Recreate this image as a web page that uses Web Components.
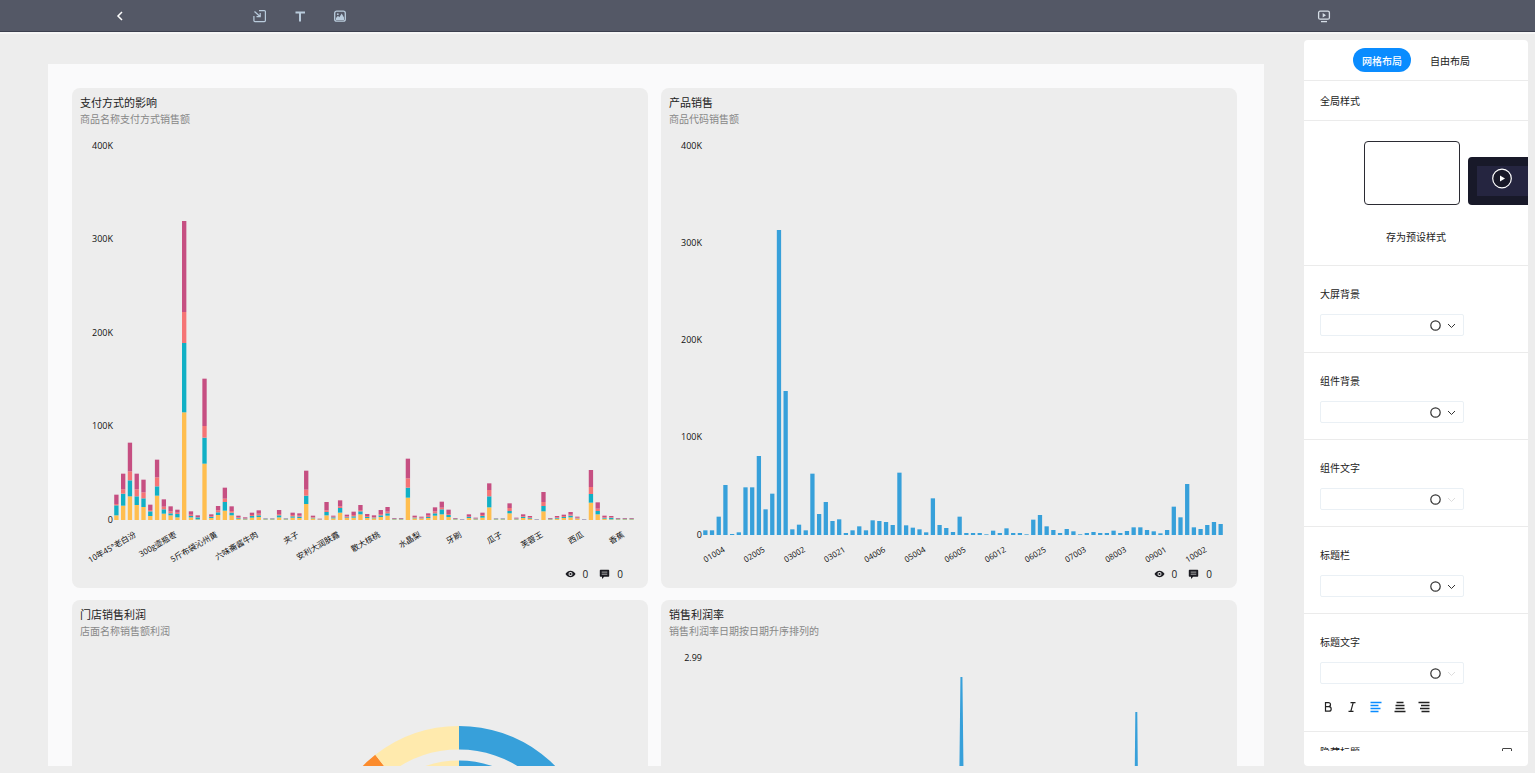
<!DOCTYPE html>
<html lang="zh-CN">
<head>
<meta charset="utf-8">
<title>大屏编辑</title>
<style>
  html, body { height: 100%; margin: 0; }
  body { background: #ededed; color: #222; font: 10px/16px "Open Sans", "Noto Sans CJK SC", sans-serif; overflow: hidden; }
</style>
</head>
<body>
<screen-editor>
  <editor-toolbar slot="toolbar"></editor-toolbar>

  <chart-card>
    <span slot="title">支付方式的影响</span>
    <span slot="subtitle">商品名称支付方式销售额</span>
    <bar-chart source="payment"></bar-chart>
  </chart-card>
  <chart-card>
    <span slot="title">产品销售</span>
    <span slot="subtitle">商品代码销售额</span>
    <bar-chart source="product"></bar-chart>
  </chart-card>
  <chart-card>
    <span slot="title">门店销售利润</span>
    <span slot="subtitle">店面名称销售额利润</span>
    <ring-chart></ring-chart>
  </chart-card>
  <chart-card>
    <span slot="title">销售利润率</span>
    <span slot="subtitle">销售利润率日期按日期升序排列的</span>
    <spike-chart></spike-chart>
  </chart-card>

  <style-panel slot="panel">
    <color-field>大屏背景</color-field>
    <color-field>组件背景</color-field>
    <color-field muted>组件文字</color-field>
    <color-field>标题栏</color-field>
    <color-field muted>标题文字<text-format slot="extra"></text-format></color-field>
  </style-panel>
</screen-editor>

<script>
const define = (name, html, setup) => {
  const template = document.createElement('template');
  template.innerHTML = html;
  customElements.define(name, class extends HTMLElement {
    constructor() {
      super();
      this.attachShadow({ mode: 'open' }).append(template.content.cloneNode(true));
      if (setup) setup(this);
    }
  });
};

define('screen-editor', `
  <style>
    :host { display: flex; flex-direction: column; height: 100vh; }
    .work { flex: 1; min-height: 0; display: flex; gap: 40px; padding: 8px 7px 7px 48px; }
    main { flex: 1; min-width: 0; margin-top: 24px; background: #fafafb; overflow: auto; scrollbar-width: none; }
    .grid { display: grid; grid-template-columns: 1fr 1fr; gap: 12px 13px; padding: 24px 27px 24px 24px; }
  </style>
  <slot name="toolbar"></slot>
  <div class="work">
    <main><div class="grid"><slot></slot></div></main>
    <slot name="panel"></slot>
  </div>`);

define('editor-toolbar', `
  <style>
    :host { display: block; position: relative; background: #545866; border-bottom: 1px solid #3c3f4e; box-shadow: 0 2px 0 #f6f6f6; }
    header { display: flex; align-items: center; height: 31px; padding: 0 199px 0 108px; }
    nav { display: flex; gap: 16px; margin-left: 116px; }
    button { display: grid; place-items: center; width: 24px; height: 24px; padding: 0; border: 0; background: none; color: #b9cbdc; }
    .back { color: #fff; }
    .play { margin-left: auto; color: #d5dde6; }
    svg { display: block; fill: none; stroke: currentColor; }
  </style>
  <header>
    <button class="back" aria-label="返回"><svg width="14" height="14" stroke-width="1.5"><path d="M9 3 5 7l4 4"/></svg></button>
    <nav>
      <button aria-label="导入"><svg width="14" height="14" stroke-width="1.2"><path d="M6 1.6h5.4a1 1 0 0 1 1 1v9a1 1 0 0 1-1 1h-9.500a1 1 0 0 1-1-1V7M1.500 2.500l5.500 5M7.200 4v3.700H3.500"/></svg></button>
      <button aria-label="文本"><svg width="14" height="14" stroke-width="2"><path d="M2.500 3.500h9.500M7 3.500v9"/></svg></button>
      <button aria-label="图片"><svg width="14" height="14" stroke-width="1.300"><rect x="1.700" y="2.200" width="10.600" height="10" rx="2"/><circle cx="4.800" cy="5.200" r=".9" fill="currentColor" stroke="none"/><path d="M3 11V9l2-2.200 1.300 1.400L8.700 4.500 11 8.500V11z" fill="currentColor" stroke="none"/></svg></button>
    </nav>
    <button class="play" aria-label="预览"><svg width="14" height="14" stroke-width="1.300"><rect x="1.600" y="2.200" width="10.800" height="8" rx="1.500"/><path d="M4 12.600h6"/><path d="M5.700 4v4.400L9 6.200z" fill="currentColor" stroke="none"/></svg></button>
  </header>`);

define('chart-card', `
  <style>
    :host { display: flex; flex-direction: column; height: 500px; box-sizing: border-box; padding: 6px 0 4px; border-radius: 8px; background: #ededed; overflow: hidden; }
    h2, p { margin: 0; padding: 0 8px; font-weight: 400; line-height: 17px; }
    h2 { font-size: 11px; color: #222; }
    p { font-size: 10px; color: #888; }
    .body { flex: 1; min-height: 0; }
    footer { display: flex; justify-content: flex-end; align-items: center; height: 20px; padding-right: 25px; gap: 11px; font-size: 10px; color: #222; }
    footer span { display: flex; align-items: center; gap: 7px; }
    svg { display: block; }
  </style>
  <h2><slot name="title"></slot></h2>
  <p><slot name="subtitle"></slot></p>
  <div class="body"><slot></slot></div>
  <footer>
    <span><svg width="11" height="10"><path d="M.5 5C2 2.600 3.600 1.800 5.500 1.800S9 2.600 10.500 5C9 7.400 7.400 8.200 5.500 8.200S2 7.400.5 5z" fill="#1c1c22"/><circle cx="5.500" cy="5" r="2" fill="#ededed"/><circle cx="5.500" cy="5" r="1.100" fill="#1c1c22"/></svg>0</span>
    <span><svg width="11" height="10"><path d="M1.500.8h8a.7.7 0 0 1 .7.700v5.600a.7.7 0 0 1-.7.700H5.200L3 9.900V7.800H1.500a.7.7 0 0 1-.7-.7V1.500a.7.7 0 0 1 .7-.7z" fill="#1c1c22"/><path d="M2.700 3.100h5.600M2.700 5.200h5.600" stroke="#bbb" stroke-width=".9"/></svg>0</span>
  </footer>`);

/* Bar heights are cumulative, one list per category, in thirds of a pixel. */
const SOURCES = {
  payment: {
    base: 392, ticks: ['0', '100K', '200K', '300K', '400K'],
    colors: ['#ffbe4f', '#11b0c5', '#f57475', '#c64f82'],
    labels: ['10年45°老白汾', '300g壶瓶枣', '5斤布袋沁州黄', '六味斋酱牛肉', '夹子', '安利大润肤露', '散大核桃', '水晶梨', '牙刷', '瓜子', '芙蓉王', '西瓜', '香蕉'],
    values: `14,44,48,76 43,79,92,139 71,119,146,232 45,71,92,139 39,65,83,121 12,26,30,46 73,101,128,181 19,32,40,62 14,20,26,41 8,18,22,31
      323,531,624,897 8,12,16,26 2,8,9,14 169,247,282,424 6,9,11,17 15,23,29,42 28,54,64,97 14,22,27,41 4,6,8,13 2,4,5,8
      7,12,15,22 9,14,19,29 2,4,4,5 2,4,4,5 8,14,18,30 2,4,4,5 7,11,15,22 6,10,13,20 48,73,91,148 5,7,9,13
      1,2,3,4 14,24,29,54 5,8,10,13 22,36,41,59 6,8,11,16 7,11,15,25 17,26,30,45 6,9,12,18 5,7,9,14 9,14,18,30
      13,20,25,39 2,4,4,6 2,4,4,6 67,97,125,184 5,7,9,13 4,5,7,10 6,9,13,20 13,20,26,38 17,32,37,55 9,15,18,31
      2,4,4,6 0,1,1,2 6,9,10,17 2,4,5,7 7,12,15,22 38,71,90,110 2,4,4,5 2,4,4,5 20,27,36,50 2,4,5,7
      6,9,11,17 4,6,8,12 0,1,1,2 26,42,54,84 2,4,4,6 4,6,8,12 6,9,12,16 8,13,16,24 4,5,7,10 0,1,1,2
      52,78,99,150 17,27,34,53 4,6,8,13 2,7,9,12 2,4,4,6 2,4,4,6 2,4,4,6`
  },
  product: {
    base: 407, ticks: ['0', '100K', '200K', '300K', '400K'],
    colors: ['#37a0da'],
    labels: ['01004', '02005', '03002', '03021', '04006', '05004', '06005', '06012', '06025', '07003', '08003', '09001', '10002'],
    values: `14 14 55 150 3 8 143 143 237 77 124 915 432 17 31 14 184 63 99 42 47 6 14 26 14 44 42 39 30 187
      29 22 17 8 110 30 21 9 55 6 6 6 2 13 6 20 6 6 2 46 60 26 15 6 18 11 2 6 9 6 6 13 6 12 23 23 15 11 5 15
      85 53 153 23 18 30 39 33`
  }
};
const AXIS = 41, TOP = 18, END = 13;
const chartStyle = `<style>
  :host { display: block; height: 100%; }
  svg { display: block; width: 100%; height: 100%; overflow: visible; }
  text { font-size: 9px; fill: #111; text-anchor: end; }
  .category { font-size: 8px; }
</style><svg role="img"></svg>`;
const drawOnResize = draw => host => {
  const svg = host.shadowRoot.querySelector('svg');
  new ResizeObserver(() => { svg.innerHTML = draw(host.clientWidth, host); }).observe(host);
};

define('bar-chart', chartStyle, drawOnResize((width, host) => {
  const { base, ticks, colors, labels, values } = SOURCES[host.getAttribute('source')];
  const bars = values.trim().split(/\s+/).map(v => v.split(',').map(Number));
  const step = (width - AXIS - END) / bars.length;
  const barWidth = step * 0.64;
  let out = '';
  ticks.forEach((t, i) => {
    const y = Math.floor(base - (base - TOP) * i / (ticks.length - 1));
    out += `<text x="${AXIS}" y="${y + 3}">${t}</text>`;
  });
  bars.forEach((levels, i) => {
    const x = AXIS + step * (i + 0.5) - barWidth / 2;
    let from = 0;
    levels.forEach((to, k) => {
      out += `<rect x="${x}" y="${base - to / 3}" width="${barWidth}" height="${(to - from) / 3}" fill="${colors[k]}"/>`;
      from = to;
    });
  });
  labels.forEach((t, i) => {
    const x = AXIS + step * (i * 6 + 3.5);
    out += `<text class="category" transform="translate(${x - 3} ${base + 11}) rotate(-30)" y="6">${t}</text>`;
  });
  return out;
}));

define('ring-chart', chartStyle, drawOnResize(width => {
  const cx = Math.round(width * 0.672), cy = 222;
  const ring = (r, thick, from, to, color) => {
    const p = (rad, a) => `${cx + rad * Math.sin(a)} ${cy - rad * Math.cos(a)}`;
    const big = to - from > Math.PI ? 1 : 0, q = r - thick;
    return `<path fill="${color}" d="M${p(r, from)}A${r} ${r} 0 ${big} 1 ${p(r, to)}L${p(q, to)}A${q} ${q} 0 ${big} 0 ${p(q, from)}z"/>`;
  };
  const slices = [[0, 2.6, '#37a0da'], [2.6, 4.3, '#67e0e3'], [4.3, 5.62, '#fb8b2c'], [5.62, 6.283, '#ffeaad']];
  return slices.map(([a, b, c]) => ring(136, 23.5, a, b, c) + ring(101.5, 23.5, a, b, c)).join('');
}));

define('spike-chart', chartStyle, drawOnResize(width => {
  const at = f => AXIS + (width - AXIS - END) * f;
  const a = at(0.497), b = at(0.832);
  return `<text x="${AXIS}" y="${TOP + 3}">2.99</text>
    <path d="M${AXIS} 391H${a - 4}L${a} 37 ${a + 4} 391H${b - 3}L${b} 72 ${b + 3} 391H${width - END}" fill="#37a0da" stroke="#37a0da" stroke-width="2"/>`;
}));

define('style-panel', `
  <style>
    :host { display: block; flex: none; width: 224px; box-sizing: border-box; padding-bottom: 15px; border-radius: 4px; background: #fff; overflow: hidden; }
    .scroll { height: 100%; overflow: auto; scrollbar-width: none; }
    section { border-bottom: 1px solid #ebebeb; }
    .tabs { display: flex; justify-content: center; align-items: center; gap: 10px; height: 40px; }
    .tabs button { height: 24px; padding: 2px 9px 0; border: 0; border-radius: 12px; background: none; color: #222; font: inherit; }
    .tabs button[aria-selected="true"] { background: #0a8cff; color: #fff; font-weight: 500; }
    h3 { margin: 0; padding: 12px 16px 11px; font: inherit; }
    .presets { display: flex; flex-direction: column; align-items: center; gap: 24px; padding: 20px 0; }
    .strip { display: flex; align-items: flex-end; gap: 8px; align-self: stretch; padding-left: 60px; overflow: hidden; }
    .strip button { flex: none; padding: 0; border-radius: 4px; overflow: hidden; }
    .blank { width: 96px; height: 64px; border: 1px solid #2b2b33; background: #fff; }
    .dark { width: 72px; height: 48px; border: 0; background: #181929; }
    .save { height: 16px; padding: 0; border: 0; background: none; color: #222; font: inherit; }
    .hide { display: flex; justify-content: space-between; align-items: flex-start; padding: 12px 16px; }
    input { appearance: none; width: 10px; height: 10px; margin: 4px 0 0; border: 1px solid #444; border-radius: 1px; }
    svg { display: block; }
  </style>
  <div class="scroll">
    <section class="tabs" role="tablist"><button role="tab" aria-selected="true">网格布局</button><button role="tab" aria-selected="false">自由布局</button></section>
    <section><h3>全局样式</h3></section>
    <section class="presets">
      <div class="strip">
        <button class="blank" aria-label="空白样式"></button>
        <button class="dark" aria-label="深色样式"><svg width="72" height="48"><rect x="9" y="9" width="54" height="30" fill="#252540"/><circle cx="34" cy="21.500" r="9.300" fill="#191929" stroke="#fff" stroke-width="1.200"/><path d="M32 18.500v6l5-3z" fill="#fff"/></svg></button>
      </div>
      <button class="save">存为预设样式</button>
    </section>
    <slot></slot>
    <div class="hide"><label for="hide">隐藏标题</label><input id="hide" type="checkbox"></div>
  </div>`);

define('color-field', `
  <style>
    :host { display: block; padding: 20px 16px 16px; border-bottom: 1px solid #ebebeb; color: #222; }
    label { display: block; margin-bottom: 12px; }
    button { display: flex; justify-content: flex-end; align-items: center; gap: 6px; width: 144px; height: 22px; padding: 0 7px; border: 1px solid #eaf0f5; border-radius: 2px; background: #fff; color: #333; }
    :host([muted]) .arrow { color: #ddd; }
    svg { display: block; fill: none; stroke: currentColor; }
  </style>
  <label for="pick"><slot></slot></label>
  <button id="pick" aria-haspopup="dialog">
    <svg width="11" height="11" stroke-width="1.200"><circle cx="5.500" cy="5.500" r="4.700"/></svg>
    <svg class="arrow" width="9" height="9"><path d="m1 3 3.500 3.500L8 3"/></svg>
  </button>
  <slot name="extra"></slot>`);

define('text-format', `
  <style>
    :host { display: flex; padding-top: 15px; margin-left: -4px; }
    button { display: grid; place-items: center; width: 24px; height: 16px; padding: 0; border: 0; background: none; color: #222; }
    .on { color: #0a8cff; }
    svg { display: block; fill: none; stroke: currentColor; }
  </style>
  <button aria-label="加粗"><svg width="12" height="12" stroke-width="1.200"><path d="M3.500 1.600h3a2 2 0 0 1 0 4h-3zM3.500 5.600h3.400a2.300 2.300 0 0 1 0 4.600H3.500z"/></svg></button>
  <button aria-label="斜体"><svg width="12" height="12" stroke-width="1.200"><path d="M4.500 1.600h5M2.500 10.400h5M7.200 1.600 4.800 10.400"/></svg></button>
  <button class="on" aria-label="左对齐"><svg width="12" height="12" stroke-width="1.400"><path d="M.5 1.500h11M.5 4.500h8M.5 7.500h10M.5 10.500h8"/></svg></button>
  <button aria-label="居中"><svg width="12" height="12" stroke-width="1.400"><path d="M2.500 1.500h7M1.500 4.500h9M1.500 7.500h9M.5 10.500h11"/></svg></button>
  <button aria-label="右对齐"><svg width="12" height="12" stroke-width="1.400"><path d="M.5 1.500h11M3 4.500h8.500M2 7.500h9.500M3.500 10.500h8"/></svg></button>`);
</script>
</body>
</html>
